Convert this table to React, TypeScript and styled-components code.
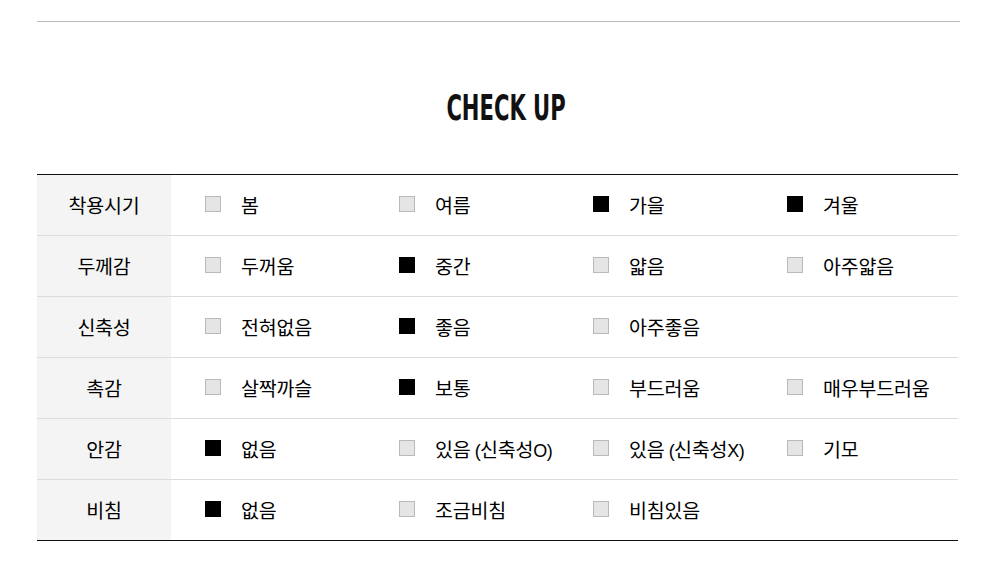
import React from "react";
import styled, { createGlobalStyle } from "styled-components";

const GlobalStyle = createGlobalStyle`
  body {
    margin: 0;
    background: #fff;
    font-family: "Noto Sans CJK KR", "Noto Sans", sans-serif;
    color: #000;
  }
`;

type Option = { label: string; checked: boolean };
type Row = { title: string; options: Option[] };

const rows: Row[] = [
  {
    title: "착용시기",
    options: [
      { label: "봄", checked: false },
      { label: "여름", checked: false },
      { label: "가을", checked: true },
      { label: "겨울", checked: true },
    ],
  },
  {
    title: "두께감",
    options: [
      { label: "두꺼움", checked: false },
      { label: "중간", checked: true },
      { label: "얇음", checked: false },
      { label: "아주얇음", checked: false },
    ],
  },
  {
    title: "신축성",
    options: [
      { label: "전혀없음", checked: false },
      { label: "좋음", checked: true },
      { label: "아주좋음", checked: false },
    ],
  },
  {
    title: "촉감",
    options: [
      { label: "살짝까슬", checked: false },
      { label: "보통", checked: true },
      { label: "부드러움", checked: false },
      { label: "매우부드러움", checked: false },
    ],
  },
  {
    title: "안감",
    options: [
      { label: "없음", checked: true },
      { label: "있음 (신축성O)", checked: false },
      { label: "있음 (신축성X)", checked: false },
      { label: "기모", checked: false },
    ],
  },
  {
    title: "비침",
    options: [
      { label: "없음", checked: true },
      { label: "조금비침", checked: false },
      { label: "비침있음", checked: false },
    ],
  },
];

const Section = styled.section`
  width: 923px;
  margin: 21px 0 0 37px;
  border-top: 1px solid #bbb;
`;

const TitleWrap = styled.div`
  display: flex;
  justify-content: center;
  padding: 60px 0 40px 15px;
`;

const Title = styled.h2`
  margin: 0;
  font-family: "Liberation Sans Narrow", "DejaVu Sans Condensed", "Liberation Sans", sans-serif;
  font-weight: 700;
  font-size: 35px;
  line-height: 52px;
  color: #111;
  transform: scaleX(0.67);
`;

const Table = styled.div`
  width: 921px;
  border-top: 1px solid #111;
  border-bottom: 1px solid #111;
`;

const TableRow = styled.div`
  display: flex;
  height: 60px;
  & + & {
    border-top: 1px solid #dcdcdc;
  }
`;

const HeadCell = styled.div`
  width: 134px;
  flex: none;
  background: #f4f4f4;
  display: flex;
  align-items: center;
  justify-content: center;
  font-size: 19.5px;
  letter-spacing: -0.2px;
  padding-bottom: 2px;
  box-sizing: border-box;
`;

const Options = styled.div`
  display: grid;
  grid-template-columns: repeat(4, 194px);
  padding-left: 34px;
  align-items: center;
`;

const OptionItem = styled.div`
  display: flex;
  align-items: center;
  gap: 20px;
  font-size: 19.5px;
  letter-spacing: -0.2px;
  padding-bottom: 2px;
`;

const Box = styled.span<{ $checked: boolean }>`
  width: 16px;
  height: 16px;
  box-sizing: border-box;
  flex: none;
  background: ${({ $checked }) => ($checked ? "#000" : "#e5e5e5")};
  border: 1px solid ${({ $checked }) => ($checked ? "#000" : "#b9b9b9")};
`;

const Paren = styled.span`
  font-family: "Liberation Sans", sans-serif;
  font-size: 18px;
  letter-spacing: -0.6px;
`;

const renderLabel = (label: string) => {
  const idx = label.indexOf(" (");
  if (idx < 0) return label;
  const inner = label.slice(idx + 2, -1);
  const last = inner.slice(-1);
  return (
    <>
      {label.slice(0, idx)}{" "}
      <Paren>(</Paren>
      {inner.slice(0, -1)}
      <Paren>{last})</Paren>
    </>
  );
};

export default function App() {
  return (
    <>
      <GlobalStyle />
      <Section>
        <TitleWrap>
          <Title>CHECK UP</Title>
        </TitleWrap>
        <Table>
          {rows.map((row) => (
            <TableRow key={row.title}>
              <HeadCell>{row.title}</HeadCell>
              <Options>
                {row.options.map((opt) => (
                  <OptionItem key={opt.label}>
                    <Box $checked={opt.checked} />
                    <span>{renderLabel(opt.label)}</span>
                  </OptionItem>
                ))}
              </Options>
            </TableRow>
          ))}
        </Table>
      </Section>
    </>
  );
}
